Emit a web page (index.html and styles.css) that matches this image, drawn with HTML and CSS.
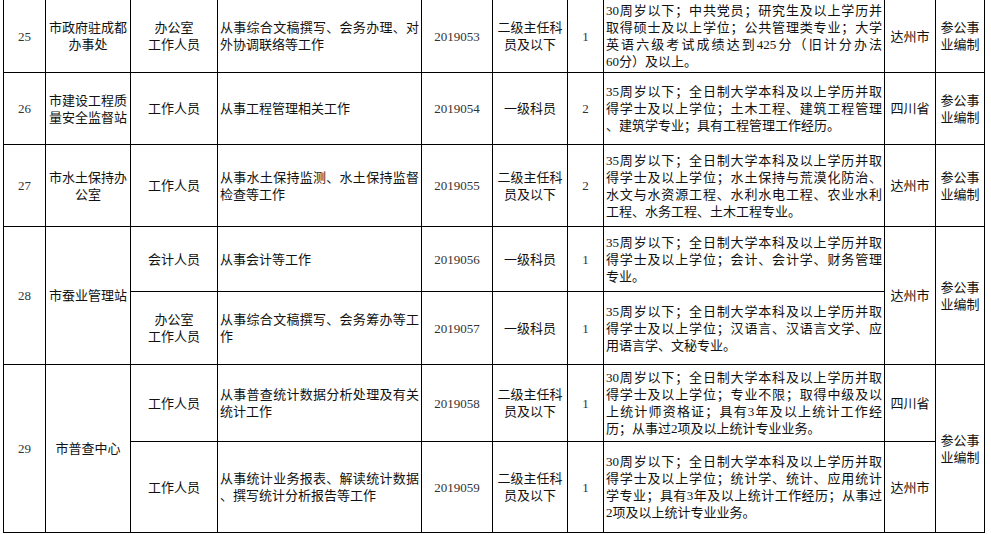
FILE: index.html
```html
<!DOCTYPE html>
<html lang="zh-CN">
<head>
<meta charset="utf-8">
<title>职位表</title>
<link rel="stylesheet" href="styles.css">
</head>
<body>
<table class="grid">
  <colgroup>
    <col class="c-no"><col class="c-unit"><col class="c-pos"><col class="c-duty"><col class="c-code">
    <col class="c-level"><col class="c-num"><col class="c-req"><col class="c-place"><col class="c-type">
  </colgroup>
  <tbody>
    <tr class="r25">
      <td class="num">25</td>
      <td class="ctr">市政府驻成都<br>办事处</td>
      <td class="ctr">办公室<br>工作人员</td>
      <td class="txt"><span class="l">从事综合文稿撰写、会务办理、对</span>外协调联络等工作</td>
      <td class="num">2019053</td>
      <td class="ctr">二级主任科<br>员及以下</td>
      <td class="num">1</td>
      <td class="txt"><span class="l">30周岁以下；中共党员；研究生及以上学历并</span><span class="l">取得硕士及以上学位；公共管理类专业；大学</span><span class="l">英语六级考试成绩达到425分（旧计分办法</span>60分）及以上。</td>
      <td class="ctr">达州市</td>
      <td class="ctr">参公事<br>业编制</td>
    </tr>
    <tr class="r26">
      <td class="num">26</td>
      <td class="ctr">市建设工程质<br>量安全监督站</td>
      <td class="ctr">工作人员</td>
      <td class="txt">从事工程管理相关工作</td>
      <td class="num">2019054</td>
      <td class="ctr">一级科员</td>
      <td class="num">2</td>
      <td class="txt"><span class="l">35周岁以下；全日制大学本科及以上学历并取</span><span class="l">得学士及以上学位；土木工程、建筑工程管理</span>、建筑学专业；具有工程管理工作经历。</td>
      <td class="ctr">四川省</td>
      <td class="ctr">参公事<br>业编制</td>
    </tr>
    <tr class="r27">
      <td class="num">27</td>
      <td class="ctr">市水土保持办<br>公室</td>
      <td class="ctr">工作人员</td>
      <td class="txt"><span class="l">从事水土保持监测、水土保持监督</span>检查等工作</td>
      <td class="num">2019055</td>
      <td class="ctr">二级主任科<br>员及以下</td>
      <td class="num">2</td>
      <td class="txt"><span class="l">35周岁以下；全日制大学本科及以上学历并取</span><span class="l">得学士及以上学位；水土保持与荒漠化防治、</span><span class="l">水文与水资源工程、水利水电工程、农业水利</span>工程、水务工程、土木工程专业。</td>
      <td class="ctr">达州市</td>
      <td class="ctr">参公事<br>业编制</td>
    </tr>
    <tr class="r28a">
      <td class="num" rowspan="2">28</td>
      <td class="ctr" rowspan="2">市蚕业管理站</td>
      <td class="ctr">会计人员</td>
      <td class="txt">从事会计等工作</td>
      <td class="num">2019056</td>
      <td class="ctr">一级科员</td>
      <td class="num">1</td>
      <td class="txt"><span class="l">35周岁以下；全日制大学本科及以上学历并取</span><span class="l">得学士及以上学位；会计、会计学、财务管理</span>专业。</td>
      <td class="ctr" rowspan="2">达州市</td>
      <td class="ctr" rowspan="2">参公事<br>业编制</td>
    </tr>
    <tr class="r28b">
      <td class="ctr">办公室<br>工作人员</td>
      <td class="txt"><span class="l">从事综合文稿撰写、会务筹办等工</span>作</td>
      <td class="num">2019057</td>
      <td class="ctr">一级科员</td>
      <td class="num">1</td>
      <td class="txt"><span class="l">35周岁以下；全日制大学本科及以上学历并取</span><span class="l">得学士及以上学位；汉语言、汉语言文学、应</span>用语言学、文秘专业。</td>
    </tr>
    <tr class="r29a">
      <td class="num" rowspan="2">29</td>
      <td class="ctr" rowspan="2">市普查中心</td>
      <td class="ctr">工作人员</td>
      <td class="txt"><span class="l">从事普查统计数据分析处理及有关</span>统计工作</td>
      <td class="num">2019058</td>
      <td class="ctr">二级主任科<br>员及以下</td>
      <td class="num">1</td>
      <td class="txt"><span class="l">30周岁以下；全日制大学本科及以上学历并取</span><span class="l">得学士及以上学位；专业不限；取得中级及以</span><span class="l">上统计师资格证；具有3年及以上统计工作经</span>历；从事过2项及以上统计专业业务。</td>
      <td class="ctr">四川省</td>
      <td class="ctr" rowspan="2">参公事<br>业编制</td>
    </tr>
    <tr class="r29b">
      <td class="ctr">工作人员</td>
      <td class="txt"><span class="l">从事统计业务报表、解读统计数据</span>、撰写统计分析报告等工作</td>
      <td class="num">2019059</td>
      <td class="ctr">二级主任科<br>员及以下</td>
      <td class="num">1</td>
      <td class="txt"><span class="l">30周岁以下；全日制大学本科及以上学历并取</span><span class="l">得学士及以上学位；统计学、统计、应用统计</span><span class="l">学专业；具有3年及以上统计工作经历；从事过</span>2项及以上统计专业业务。</td>
      <td class="ctr">达州市</td>
    </tr>
  </tbody>
</table>
</body>
</html>
```
FILE: styles.css
```css
html, body {
  margin: 0;
  padding: 0;
  background: #ffffff;
  overflow: hidden;
}

.grid {
  margin: -1px 0 0 3px;
  border-collapse: collapse;
  table-layout: fixed;
  width: 982px;
  font-family: "Liberation Serif", "Noto Sans CJK SC", sans-serif;
  font-size: 13px;
  line-height: 17px;
  color: #111111;
}

.grid td {
  border: 1px solid #000000;
  padding: 0 2px;
  vertical-align: middle;
  overflow: hidden;
}

.c-no { width: 42px; }
.c-unit { width: 85px; }
.c-pos { width: 87px; }
.c-duty { width: 204px; }
.c-code { width: 71px; }
.c-level { width: 75px; }
.c-num { width: 36px; }
.c-req { width: 281px; }
.c-place { width: 51px; }
.c-type { width: 49px; }

.r25 { height: 73px; }
.r26 { height: 72px; }
.r27 { height: 82px; }
.r28a { height: 65px; }
.r28b { height: 73px; }
.r29a { height: 77px; }
.r29b { height: 91px; }

.num {
  text-align: center;
  color: #333333;
}

.ctr {
  text-align: center;
}

.txt {
  text-align: left;
}

.l {
  display: block;
  text-align: justify;
  text-align-last: justify;
}
```
